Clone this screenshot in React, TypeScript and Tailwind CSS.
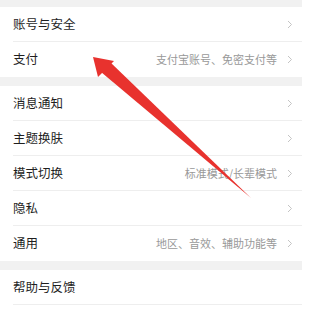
import React from "react";

type Row = { label: string; hint?: string; arrow?: boolean };

const groups: Row[][] = [
  [
    { label: "账号与安全", arrow: true },
    { label: "支付", hint: "支付宝账号、免密支付等", arrow: true },
  ],
  [
    { label: "消息通知", arrow: true },
    { label: "主题换肤", arrow: true },
    { label: "模式切换", hint: "标准模式/长辈模式", arrow: true },
    { label: "隐私", arrow: true },
    { label: "通用", hint: "地区、音效、辅助功能等", arrow: true },
  ],
  [{ label: "帮助与反馈" }, { label: "" }],
];

function Chevron() {
  return (
    <svg width="6" height="9" viewBox="0 0 6 9" className="shrink-0">
      <polyline points="1,1 4.5,4.5 1,8" fill="none" stroke="#c4c4c4" strokeWidth="1" />
    </svg>
  );
}

export default function App() {
  return (
    <div
      className="relative w-[302px] h-[309px] overflow-hidden bg-[#f1f1f1] pt-[7px] flex flex-col gap-[9px]"
      style={{ fontFamily: '"Noto Sans CJK SC", "Noto Sans", sans-serif' }}
    >
      {groups.map((g, gi) => (
        <div key={gi} className="bg-white pl-[13px]">
          {g.map((r, ri) => (
            <div
              key={ri}
              className={`h-[35px] flex items-center pr-[9px] ${ri < g.length - 1 ? "border-b border-[#eeeeee]" : ""}`}
            >
              <span className="flex-1 text-[12.5px] text-[#1f1f1f]">{r.label}</span>
              {r.hint && <span className="text-[11px] text-[#999999] mr-[10px]">{r.hint}</span>}
              {r.arrow && <Chevron />}
            </div>
          ))}
        </div>
      ))}

      {/* red annotation arrow */}
      <svg className="absolute left-0 top-0 pointer-events-none" width="302" height="309" viewBox="0 0 302 309">
        <polygon points="251,198 110,62 101,72" fill="#e8322e" />
        <polygon points="93,57 114,61 98,77" fill="#e8322e" />
      </svg>
    </div>
  );
}
